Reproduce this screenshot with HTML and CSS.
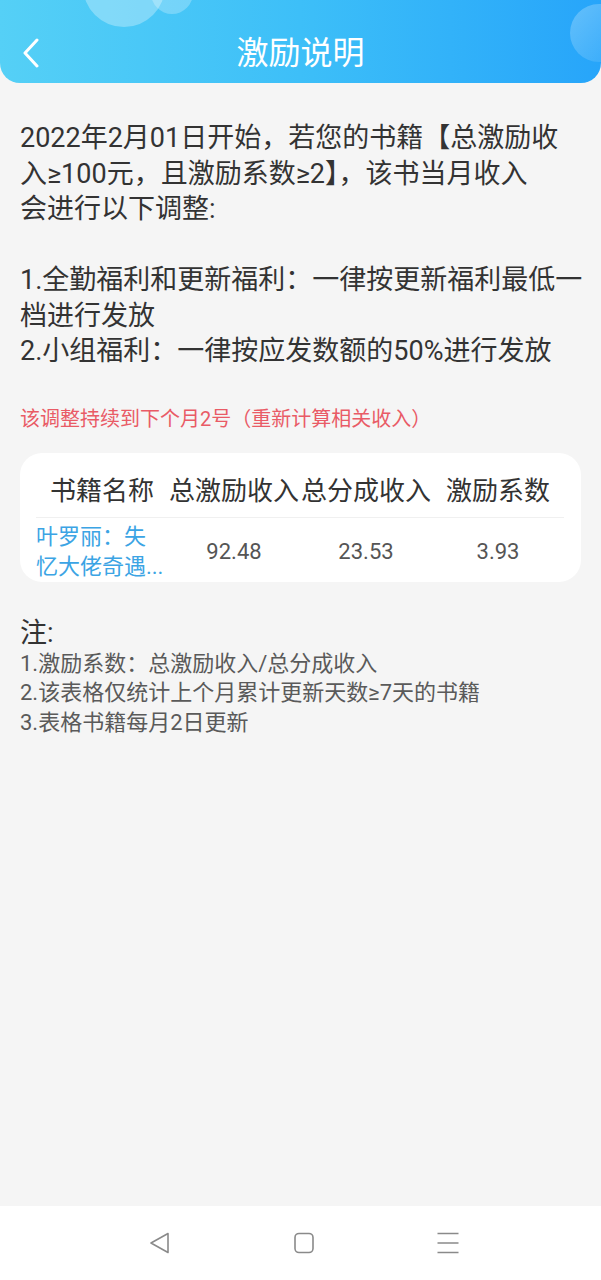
FILE: index.html
```html
<!DOCTYPE html>
<html lang="zh-CN">
<head>
  <meta charset="UTF-8">
  <meta name="viewport" content="width=device-width, initial-scale=1.0">
  <title>激励说明</title>
  <link rel="stylesheet" href="styles.css">
</head>
<body>
  <header class="topbar">
    <span class="bubble bubble-big"></span>
    <span class="bubble bubble-small"></span>
    <span class="bubble bubble-right"></span>
    <a class="back" href="#">
      <svg width="20" height="30" viewBox="0 0 20 30">
        <polyline points="15,2 3,15 15,28" fill="none" stroke="#fff" stroke-width="3" stroke-linecap="round" stroke-linejoin="round"/>
      </svg>
    </a>
    <h1 class="title">激励说明</h1>
  </header>

  <main class="content">
    <p class="intro">2022年2月01日开始，若您的书籍【总激励收<br>入≥100元，且激励系数≥2】，该书当月收入<br>会进行以下调整:</p>
    <p class="intro rules">1.全勤福利和更新福利：一律按更新福利最低一<br>档进行发放<br>2.小组福利：一律按应发数额的50%进行发放</p>

    <p class="warn">该调整持续到下个月2号（重新计算相关收入）</p>

    <div class="card">
      <div class="row head">
        <span>书籍名称</span>
        <span>总激励收入</span>
        <span>总分成收入</span>
        <span>激励系数</span>
      </div>
      <div class="row body">
        <span class="book">叶罗丽：失忆大佬奇遇...</span>
        <span>92.48</span>
        <span>23.53</span>
        <span>3.93</span>
      </div>
    </div>

    <div class="notes">
      <h3>注:</h3>
      <p>1.激励系数：总激励收入/总分成收入</p>
      <p>2.该表格仅统计上个月累计更新天数≥7天的书籍</p>
      <p>3.表格书籍每月2日更新</p>
    </div>
  </main>

  <nav class="navbar">
    <span class="nav-btn">
      <svg width="24" height="24" viewBox="0 0 24 24">
        <path d="M20 2.5 L3 12 L20 21.5 Z" fill="none" stroke="#8a8a8a" stroke-width="1.6" stroke-linejoin="round"/>
      </svg>
    </span>
    <span class="nav-btn">
      <svg width="24" height="24" viewBox="0 0 24 24">
        <rect x="3" y="2.5" width="18" height="19" rx="4" fill="none" stroke="#8a8a8a" stroke-width="1.6"/>
      </svg>
    </span>
    <span class="nav-btn">
      <svg width="24" height="24" viewBox="0 0 24 24">
        <path d="M1.5 2.5 H22.5 M1.5 12 H22.5 M1.5 21.5 H22.5" stroke="#8a8a8a" stroke-width="1.6"/>
      </svg>
    </span>
  </nav>
</body>
</html>
```

FILE: styles.css
```css
* {
  box-sizing: border-box;
}
body {
  margin: 0;
  min-height: 100vh;
  display: flex;
  flex-direction: column;
  background-color: #f5f5f5;
  font-family: Roboto, "Noto Sans CJK SC", sans-serif;
  color: #333;
}
.topbar {
  position: relative;
  overflow: hidden;
  height: 83px;
  padding-top: 23px;
  display: flex;
  align-items: center;
  justify-content: center;
  background: linear-gradient(90deg, #55d0f6 0%, #3dbff8 50%, #27a5fa 100%);
  border-radius: 0 0 20px 20px;
}
.bubble {
  position: absolute;
  border-radius: 50%;
}
.bubble-big {
  left: 83px;
  top: -55px;
  width: 82px;
  height: 82px;
  background-color: rgba(255, 255, 255, 0.3);
}
.bubble-small {
  left: 151px;
  top: -28px;
  width: 42px;
  height: 42px;
  background-color: rgba(255, 255, 255, 0.25);
}
.bubble-right {
  left: 570px;
  top: 4px;
  width: 58px;
  height: 58px;
  background: linear-gradient(135deg, rgba(255, 255, 255, 0.28), rgba(255, 255, 255, 0.05));
}
.back {
  position: absolute;
  left: 22px;
  top: 38px;
  display: flex;
}
.title {
  margin: 0;
  height: 60px;
  line-height: 60px;
  font-size: 32px;
  font-weight: 400;
  color: #fff;
}
.content {
  flex: 1;
  padding: 38px 20px 0;
}
.intro {
  margin: 0 0 35.5px;
  font-size: 27px;
  line-height: 35.5px;
  white-space: nowrap;
}
.intro.rules {
  margin-bottom: 35px;
}
.warn {
  margin: 0 0 20px;
  font-size: 20px;
  line-height: 28px;
  color: #e95b66;
}
.card {
  background-color: #fff;
  border-radius: 22px;
  padding: 0 17px 0 16px;
}
.row {
  display: grid;
  grid-template-columns: repeat(4, 132px);
  align-items: center;
  text-align: center;
  white-space: nowrap;
}
.row.head {
  padding: 20px 0 8px;
  border-bottom: 1px solid #f0f0f0;
  font-size: 26px;
  line-height: 36px;
  color: #333;
}
.row.body {
  padding-top: 4px;
  font-size: 22px;
  line-height: 30px;
  color: #555;
}
.book {
  text-align: left;
  white-space: normal;
  padding-right: 3px;
  color: #3ba4e4;
}
.notes {
  margin-top: 36px;
}
.notes h3 {
  margin: 0 0 1px;
  font-size: 27px;
  font-weight: 400;
  line-height: 30px;
  color: #333;
}
.notes p {
  margin: 0;
  font-size: 22px;
  line-height: 29.5px;
  color: #5a5a5a;
}
.navbar {
  height: 74px;
  padding-left: 6px;
  display: grid;
  grid-template-columns: repeat(3, 144px);
  justify-content: center;
  align-items: center;
  background-color: #fff;
}
.nav-btn {
  display: flex;
  justify-content: center;
}
```
